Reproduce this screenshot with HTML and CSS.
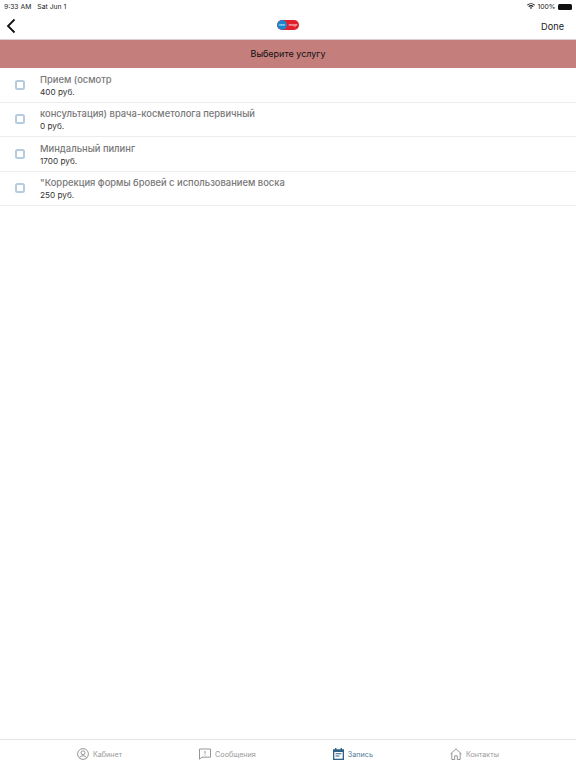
FILE: index.html
```html
<!DOCTYPE html>
<html>
<head>
    <title>Выберите услугу</title>
    <link rel="stylesheet" href="styles.css">
</head>
<body>
    <div class="app">
        <div class="status-bar">
            <div class="status-left"><span>9:33 AM</span><span>Sat Jun 1</span></div>
            <div class="status-right">
                <svg class="wifi" width="8" height="6.400" viewBox="0 0 10 8"><path d="M5 7.600 3.500 5.900a2.200 2.200 0 0 1 3 0zM2.600 5 1.700 4a4.900 4.900 0 0 1 6.600 0l-.9 1a3.600 3.600 0 0 0-4.800 0zM.9 3.200 0 2.200a7.400 7.400 0 0 1 10 0l-.9 1a6.100 6.100 0 0 0-8.200 0z" fill="#111"/></svg>
                <span>100%</span>
                <div class="battery"></div>
            </div>
        </div>
        <div class="nav-bar">
            <svg class="back" width="10" height="16" viewBox="0 0 10 16"><path d="M8.500 1.500 2 8l6.500 6.500" fill="none" stroke="#111" stroke-width="1.800"/></svg>
            <div class="logo"><div class="logo-blue"><span>new</span></div><div class="logo-red"><span>image</span></div></div>
            <div class="done">Done</div>
        </div>
        <div class="title-bar">Выберите услугу</div>
        <div class="list">
            <div class="row">
                <div class="check"></div>
                <div><div class="name">Прием (осмотр</div><div class="price">400 руб.</div></div>
            </div>
            <div class="row">
                <div class="check"></div>
                <div><div class="name">консультация) врача-косметолога первичный</div><div class="price">0 руб.</div></div>
            </div>
            <div class="row">
                <div class="check"></div>
                <div><div class="name">Миндальный пилинг</div><div class="price">1700 руб.</div></div>
            </div>
            <div class="row">
                <div class="check"></div>
                <div><div class="name">"Коррекция формы бровей с использованием воска</div><div class="price">250 руб.</div></div>
            </div>
        </div>
        <div class="tab-bar">
            <div class="tab">
                <svg width="12" height="12" viewBox="0 0 12 12" fill="none" stroke="#8a8a8a" stroke-width="0.9"><circle cx="6" cy="6" r="5.400"/><circle cx="6" cy="4.800" r="2"/><path d="M2.600 9.800c.6-1.500 1.900-2 3.400-2s2.800.5 3.400 2"/></svg>
                <span>Кабинет</span>
            </div>
            <div class="tab">
                <svg width="12" height="12" viewBox="0 0 12 12" fill="none" stroke="#8a8a8a" stroke-width="0.9"><path d="M.5 1h11v8.200H3L.5 11.200z"/><path d="M6 3v2.600M6 6.600v.9"/></svg>
                <span>Сообщения</span>
            </div>
            <div class="tab active">
                <svg width="11" height="12" viewBox="0 0 11 12"><path d="M2 0h1.400v1.200h4.200V0H9v1.200h2V12H0V1.200h2z" fill="#2f6288"/><path d="M1.300 4h8.400v6.700H1.300z" fill="#fff"/><path d="M2.500 5.200h6v1.100h-6zM2.500 7.500h4v1.100h-4z" fill="#2f6288"/></svg>
                <span>Запись</span>
            </div>
            <div class="tab">
                <svg width="12" height="12" viewBox="0 0 12 12" fill="none" stroke="#8a8a8a" stroke-width="0.9"><path d="M.5 6 6 .8 11.500 6M1.800 5v6.500h2.900V7.800h2.600v3.700h2.900V5"/></svg>
                <span>Контакты</span>
            </div>
        </div>
    </div>
</body>
</html>
```

FILE: styles.css
```css
* {
    box-sizing: border-box;
}
body {
    margin: 0;
    font-family: Inter, "Liberation Sans", sans-serif;
    background: #fff;
    color: #111;
}
.app {
    display: flex;
    flex-direction: column;
    height: 768px;
    overflow: hidden;
}
.status-bar {
    display: flex;
    justify-content: space-between;
    align-items: center;
    height: 13px;
    padding: 0 4px;
    font-size: 6.800px;
    color: #222;
}
.status-left {
    display: flex;
    gap: 6px;
}
.status-right {
    display: flex;
    align-items: center;
    gap: 2.500px;
}
.battery {
    width: 14px;
    height: 6px;
    border-radius: 1.500px;
    background: #111;
}
.nav-bar {
    display: flex;
    align-items: center;
    justify-content: space-between;
    height: 26px;
    padding: 0 12px 0 6px;
    position: relative;
}
.logo {
    display: flex;
    position: absolute;
    left: 277px;
    top: 7px;
    width: 22px;
    height: 10px;
    border-radius: 5px;
    background: #e2202c;
    overflow: hidden;
    font-size: 3px;
    color: #fff;
    line-height: 10px;
    text-align: center;
}
.logo-blue {
    width: 10px;
    background: #1d86c9;
    border-radius: 5px;
}
.logo-red {
    flex: 1;
}
.done {
    font-size: 9.200px;
    color: #222;
}
.title-bar {
    display: flex;
    align-items: center;
    justify-content: center;
    height: 29px;
    padding-bottom: 1px;
    background: #c47f7d;
    border-top: 1px solid #dccfcf;
    font-size: 9px;
    color: #111;
}
.row {
    display: flex;
    align-items: center;
    height: 34.500px;
    padding-left: 15px;
    gap: 15px;
    border-bottom: 1px solid #ececec;
}
.check {
    width: 10px;
    height: 10px;
    border: 2px solid #b4cbe0;
    border-radius: 2.500px;
}
.name {
    padding-top: 1px;
    font-size: 9.400px;
    font-weight: 500;
    line-height: 14px;
    color: #777;
}
.price {
    font-size: 8.200px;
    line-height: 11px;
    color: #333;
}
.tab-bar {
    display: flex;
    justify-content: space-evenly;
    height: 29px;
    margin-top: auto;
    border-top: 1px solid #e4e4e4;
}
.tab {
    display: flex;
    align-items: center;
    gap: 4px;
    font-size: 7.200px;
    color: #999;
}
.tab.active {
    color: #4f7da0;
}
```
